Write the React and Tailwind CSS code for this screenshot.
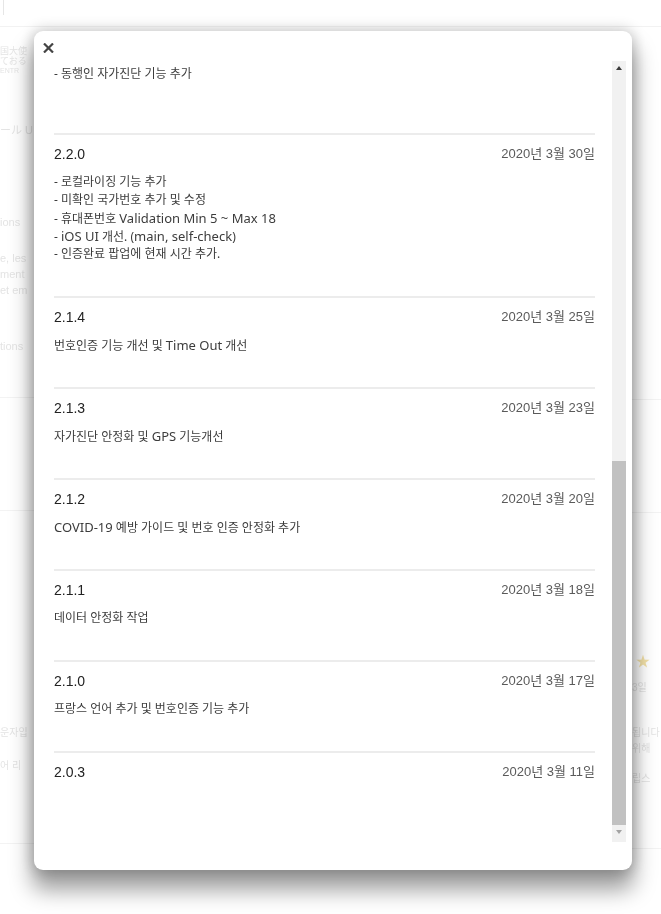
import React from "react";

const releases = [
  { version: "2.2.0", date: "2020년 3월 30일", notes: ["- 로컬라이징 기능 추가", "- 미확인 국가번호 추가 및 수정", "- 휴대폰번호 Validation Min 5 ~ Max 18", "- iOS UI 개선. (main, self-check)", "- 인증완료 팝업에 현재 시간 추가."] },
  { version: "2.1.4", date: "2020년 3월 25일", notes: ["번호인증 기능 개선 및 Time Out 개선"] },
  { version: "2.1.3", date: "2020년 3월 23일", notes: ["자가진단 안정화 및 GPS 기능개선"] },
  { version: "2.1.2", date: "2020년 3월 20일", notes: ["COVID-19 예방 가이드 및 번호 인증 안정화 추가"] },
  { version: "2.1.1", date: "2020년 3월 18일", notes: ["데이터 안정화 작업"] },
  { version: "2.1.0", date: "2020년 3월 17일", notes: ["프랑스 언어 추가 및 번호인증 기능 추가"] },
  { version: "2.0.3", date: "2020년 3월 11일", notes: [] },
];

const font = { fontFamily: '"Liberation Sans", "Noto Sans CJK KR", sans-serif' };
const noteFont = { fontFamily: '"Noto Sans", "Noto Sans CJK KR", sans-serif' };

// latin runs come out a touch larger than the hangul in the original
const Note = ({ text }) => {
  const parts = text.split(/([A-Za-z][A-Za-z0-9 .,~\-]*[A-Za-z0-9])/g);
  return (
    <div className="h-[18px] whitespace-nowrap">
      {parts.map((p, i) =>
        i % 2 === 1 ? (
          <span key={i} className="text-[13px]">{p}</span>
        ) : (
          <span key={i}>{p}</span>
        )
      )}
    </div>
  );
};

// faint page behind the dialog
const Backdrop = () => (
  <div className="min-h-[914px] bg-white text-[11px] text-[#e4e4e4] blur-[0.5px]" style={font}>
    <div className="h-[27px] border-b border-[#f2f2f2]">
      <div className="ml-[3px] h-[15px] w-px bg-[#e6e6e6]" />
    </div>
    <div className="flex justify-between">
      <div className="w-[34px] overflow-hidden whitespace-nowrap">
        <div className="mt-[19px] text-[9px] leading-[10px]">国大使</div>
        <div className="text-[9px] leading-[10px]">ておる</div>
        <div className="text-[7px] leading-[10px]">ENTR</div>
        <div className="mt-[46px]">ール U</div>
        <div className="mt-[75px]">ions</div>
        <div className="mt-[20px] leading-[16px]">e, les</div>
        <div className="leading-[16px]">ment</div>
        <div className="leading-[16px]">et em</div>
        <div className="mt-[40px]">tions</div>
        <div className="mt-[42px] h-px w-full bg-[#f3f3f3]" />
        <div className="mt-[112px] h-px w-full bg-[#f3f3f3]" />
        <div className="mt-[214px] text-[10px]">운자입</div>
        <div className="mt-[18px] text-[10px]">어 리</div>
        <div className="mt-[70px] h-px w-full bg-[#f3f3f3]" />
      </div>
      <div className="w-[29px] overflow-hidden whitespace-nowrap">
        <div className="mt-[372px] h-px w-full bg-[#f3f3f3]" />
        <div className="mt-[112px] h-px w-full bg-[#f3f3f3]" />
        <div className="mt-[138px] ml-[4px] text-[14px] text-[#f3e1a8]">★</div>
        <div className="mt-[8px] text-[10px]">3일</div>
        <div className="mt-[30px] text-[10px] leading-[16px]">됩니다</div>
        <div className="text-[10px] leading-[16px]">위해</div>
        <div className="mt-[14px] text-[10px]">립스</div>
        <div className="mt-[62px] h-px w-full bg-[#f3f3f3]" />
      </div>
    </div>
  </div>
);

const Scrollbar = () => (
  <div className="flex w-[14px] flex-col bg-[#f1f1f1]">
    <div className="flex h-[14px] items-center justify-center">
      <div className="h-0 w-0 border-x-[3px] border-b-[4px] border-x-transparent border-b-[#3a3a3a]" />
    </div>
    <div className="mt-[386px] h-[364px] bg-[#c1c1c1]" />
    <div className="flex h-[14px] items-center justify-center">
      <div className="h-0 w-0 border-x-[3px] border-t-[4px] border-x-transparent border-t-[#a3a3a3]" />
    </div>
  </div>
);

const Release = ({ version, date, notes }) => (
  <div className="border-t-2 border-[#ececec] pt-[9px] pb-[33px]">
    <div className="flex h-[20px] items-center justify-between">
      <span className="text-[14px] text-[#222]">{version}</span>
      <span className="text-[13px] text-[#5a5a5a]">{date}</span>
    </div>
    {notes.length > 0 && (
      <div className="mt-[9px] text-[12px] leading-[18px] text-[#3c3c3c]" style={noteFont}>
        {notes.map((n) => (
          <Note key={n} text={n} />
        ))}
      </div>
    )}
  </div>
);

export default function App() {
  return (
    <div className="relative">
      <Backdrop />
      <div
        className="fixed left-[34px] top-[31px] flex h-[839px] w-[598px] flex-col rounded-[9px] bg-white shadow-[0_18px_22px_2px_rgba(0,0,0,0.38),0_0_14px_2px_rgba(0,0,0,0.2)]"
        style={font}
      >
        <div className="h-[30px] pl-[9px] pt-[12px]">
          <button className="block text-[#444]" aria-label="close">
            <svg width="11" height="10" viewBox="0 0 11 10">
              <path d="M1 0.5 L10 9.5 M10 0.5 L1 9.5" stroke="currentColor" strokeWidth="2.2" />
            </svg>
          </button>
        </div>
        <div className="flex h-[781px] pr-[6px]">
          <div className="flex-1 overflow-hidden pl-[20px] pr-[17px]">
            <div className="pt-[4px] pb-[50px] text-[12px] leading-[18px] text-[#3c3c3c]" style={noteFont}>
              - 동행인 자가진단 기능 추가
            </div>
            {releases.map((r) => (
              <Release key={r.version} {...r} />
            ))}
          </div>
          <Scrollbar />
        </div>
      </div>
    </div>
  );
}
